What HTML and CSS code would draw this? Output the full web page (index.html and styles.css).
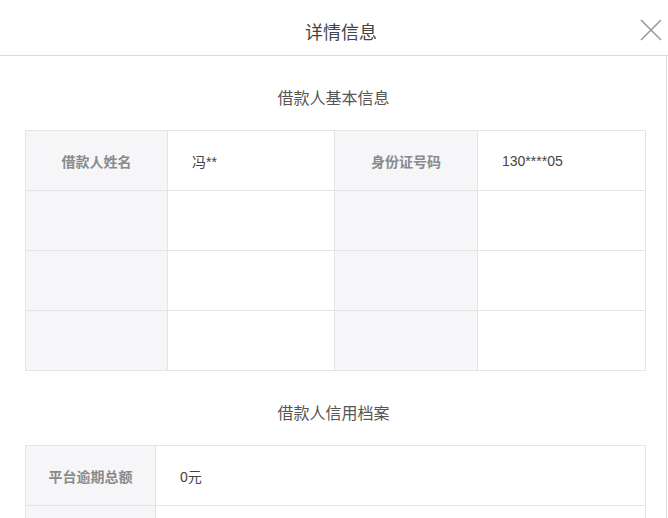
FILE: index.html
```html
<!DOCTYPE html>
<html lang="zh-CN">
<head>
  <meta charset="UTF-8" />
  <meta name="viewport" content="width=device-width, initial-scale=1.0" />
  <title>详情信息</title>
  <link rel="stylesheet" href="styles.css">
</head>
<body>
  <div class="dialog-header">
    <span class="dialog-title">详情信息</span>
    <span class="close-btn">
      <svg width="22" height="22" viewBox="0 0 22 22">
        <path d="M1 1 L21 21 M21 1 L1 21" stroke="#9a9a9a" stroke-width="1.6" fill="none" />
      </svg>
    </span>
  </div>

  <div class="dialog-body">
    <div class="section-title">借款人基本信息</div>
    <div class="info-grid basic">
      <div class="cell label">借款人姓名</div>
      <div class="cell value">冯**</div>
      <div class="cell label">身份证号码</div>
      <div class="cell value">130****05</div>

      <div class="cell label"></div>
      <div class="cell value"></div>
      <div class="cell label"></div>
      <div class="cell value"></div>

      <div class="cell label"></div>
      <div class="cell value"></div>
      <div class="cell label"></div>
      <div class="cell value"></div>

      <div class="cell label"></div>
      <div class="cell value"></div>
      <div class="cell label"></div>
      <div class="cell value"></div>
    </div>

    <div class="section-title second">借款人信用档案</div>
    <div class="info-grid credit">
      <div class="cell label">平台逾期总额</div>
      <div class="cell value">0元</div>
      <div class="cell label"></div>
      <div class="cell value"></div>
    </div>
  </div>
</body>
</html>
```

FILE: styles.css
```css
* {
  margin: 0;
  padding: 0;
  box-sizing: border-box;
}

html, body {
  height: 100%;
  overflow: hidden;
}

body {
  font-family: 'Liberation Sans', 'Noto Sans CJK SC', sans-serif;
  background: #ffffff;
  color: #333;
}

.dialog-header {
  position: relative;
  height: 56px;
  padding-top: 11px;
  display: flex;
  align-items: center;
  justify-content: center;
  border-bottom: 1px solid #dcdcdc;
}

.dialog-title {
  font-size: 18px;
  color: #444;
  line-height: 24px;
  padding-left: 14px;
}

.close-btn {
  position: absolute;
  right: 6px;
  top: 19px;
  width: 22px;
  height: 22px;
}

.close-btn svg {
  display: block;
}

.dialog-body {
  height: calc(100% - 56px);
  overflow: hidden;
  margin-right: 1px;
  border-right: 1px solid #dedede;
  padding: 32px 0 0 25px;
}

.section-title {
  width: 621px;
  text-align: center;
  font-size: 16px;
  line-height: 22px;
  color: #555;
  padding-right: 4px;
  margin-bottom: 20px;
}

.section-title.second {
  margin-top: 32px;
  margin-bottom: 20px;
}

.info-grid {
  display: grid;
  width: 621px;
  border-top: 1px solid #e4e4e4;
  border-left: 1px solid #e4e4e4;
  grid-auto-rows: 60px;
}

.info-grid.basic {
  grid-template-columns: 142px 167px 143px 168px;
}

.info-grid.credit {
  grid-template-columns: 130px 490px;
}

.cell {
  border-right: 1px solid #e4e4e4;
  border-bottom: 1px solid #e4e4e4;
  display: flex;
  align-items: center;
  font-size: 14px;
}

.cell.label {
  background: #f6f6f9;
  justify-content: center;
  color: #8a8a8a;
  font-weight: bold;
}

.cell.value {
  background: #fff;
  padding-left: 24px;
  color: #444;
}
```
